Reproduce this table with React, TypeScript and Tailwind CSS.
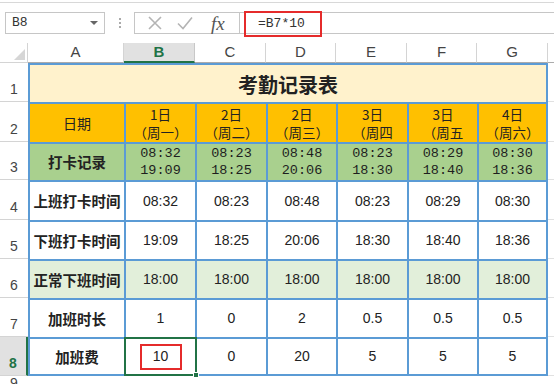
import React from "react";

const cjk = { fontFamily: '"Noto Sans CJK SC", "Liberation Sans", sans-serif' };
const sans = { fontFamily: '"Liberation Sans", "Noto Sans CJK SC", sans-serif' };
const mono = { fontFamily: '"Liberation Mono", "Noto Sans CJK SC", monospace' };

const colW = ["w-[96px]", "w-[71px]", "w-[71px]", "w-[70px]", "w-[71px]", "w-[70px]", "w-[71px]"];
const letters = ["A", "B", "C", "D", "E", "F", "G"];

const dates = [
  ["1日", "（周一）"],
  ["2日", "（周二）"],
  ["2日", "（周三）"],
  ["3日", "（周四"],
  ["3日", "（周五"],
  ["4日", "（周六）"],
];

const punches = [
  ["08:32", "19:09"],
  ["08:23", "18:25"],
  ["08:48", "20:06"],
  ["08:23", "18:30"],
  ["08:29", "18:40"],
  ["08:30", "18:36"],
];

const rows = [
  { n: 4, h: "h-[40px]", label: "上班打卡时间", bg: "bg-white", vals: ["08:32", "08:23", "08:48", "08:23", "08:29", "08:30"] },
  { n: 5, h: "h-[39px]", label: "下班打卡时间", bg: "bg-white", vals: ["19:09", "18:25", "20:06", "18:30", "18:40", "18:36"] },
  { n: 6, h: "h-[39px]", label: "正常下班时间", bg: "bg-[#e2efda]", vals: ["18:00", "18:00", "18:00", "18:00", "18:00", "18:00"] },
  { n: 7, h: "h-[39px]", label: "加班时长", bg: "bg-white", vals: ["1", "0", "2", "0.5", "0.5", "0.5"] },
];

function RowHead({ n, active }: { n: number; active?: boolean }) {
  return (
    <div
      style={sans}
      className={`w-[28px] shrink-0 flex items-end justify-center pb-[1px] text-[14px] border-b border-[#d4d4d4] ${
        active ? "bg-[#e1e1e1] text-[#217346] font-bold border-r-2 border-r-[#217346]" : "bg-white text-[#444]"
      }`}
    >
      {n}
    </div>
  );
}

function cellCls(i: number, last?: boolean) {
  return `${colW[i]} shrink-0 h-full flex items-center justify-center border-l-2 border-t-2 border-[#5b9bd5] ${
    i === 6 ? "border-r-2" : ""
  } ${last ? "border-b-2" : ""}`;
}

function Tail() {
  return <div className="flex-1 border-b border-[#e1e1e1]" />;
}

export default function App() {
  return (
    <div className="w-[554px] h-[384px] overflow-hidden bg-white text-[#222]">
      {/* formula bar */}
      <div className="h-[43px] pt-[2px]">
        <div className="border-t border-[#d8d8d8] h-full flex items-start pt-[9px]">
          <div className="ml-[5px] w-[100px] h-[22px] border border-[#c6c6c6] flex items-center justify-between pl-[6px] pr-[6px]">
            <span style={mono} className="text-[13px] text-[#333]">B8</span>
            <svg width="8" height="5" viewBox="0 0 8 5"><polygon points="0,0 8,0 4,4" fill="#666" /></svg>
          </div>
          <div className="w-[29px] h-[22px] flex flex-col items-center justify-center gap-[2px]">
            <span className="w-[2px] h-[2px] bg-[#aaa]" />
            <span className="w-[2px] h-[2px] bg-[#aaa]" />
            <span className="w-[2px] h-[2px] bg-[#aaa]" />
          </div>
          <div className="w-[106px] h-[22px] border border-[#c6c6c6] flex items-center pl-[12px]">
            <svg width="16" height="16" viewBox="0 0 16 16">
              <path d="M2 2 L14 14 M14 2 L2 14" stroke="#b4b4b4" strokeWidth="1.6" fill="none" />
            </svg>
            <svg width="18" height="16" viewBox="0 0 18 16" className="ml-[13px]">
              <path d="M2 8.5 L7 13.5 L16 2.5" stroke="#b4b4b4" strokeWidth="1.6" fill="none" />
            </svg>
            <span
              className="ml-[17px] text-[19px] italic text-[#555] leading-none"
              style={{ fontFamily: '"Liberation Serif", serif' }}
            >
              fx
            </span>
          </div>
          <div className="relative flex-1 h-[22px] border-t border-b border-[#c6c6c6]">
            <div className="absolute left-[4px] top-[-2px] w-[78px] h-[26px] border-2 border-[#e52b2b] flex items-center pl-[12px]">
              <span style={mono} className="text-[13px] text-[#333]">=B7*10</span>
            </div>
          </div>
        </div>
      </div>

      {/* column headers */}
      <div className="flex h-[20px]">
        <div className="w-[28px] shrink-0 border-b border-r border-[#d4d4d4] flex items-end justify-end pr-[2px] pb-[2px]">
          <svg width="11" height="11" viewBox="0 0 11 11"><polygon points="11,0 11,11 0,11" fill="#d6d6d6" /></svg>
        </div>
        {letters.map((l, i) => (
          <div
            key={l}
            style={sans}
            className={`${colW[i]} shrink-0 flex items-center justify-center text-[15px] ${
              i === 1
                ? "bg-[#e1e1e1] text-[#217346] font-bold border-b-2 border-[#217346] border-r border-r-[#c8c8c8]"
                : "text-[#444] border-b border-r border-[#d4d4d4] border-b-[#ababab]"
            }`}
          >
            {l}
          </div>
        ))}
        <div className="flex-1 border-b border-[#ababab]" />
      </div>

      {/* row 1 */}
      <div className="flex h-[39px]">
        <RowHead n={1} />
        <div
          style={cjk}
          className="w-[520px] shrink-0 h-full flex items-center justify-center border-l-2 border-t-2 border-r-2 border-[#5b9bd5] bg-[#fff2cc] text-[20px] font-bold pt-[3px]"
        >
          考勤记录表
        </div>
        <Tail />
      </div>

      {/* row 2 */}
      <div className="flex h-[40px]">
        <RowHead n={2} />
        <div style={cjk} className={`${cellCls(0)} bg-[#ffc000] text-[14px]`}>日期</div>
        {dates.map((d, i) => (
          <div key={i} style={cjk} className={`${cellCls(i + 1)} bg-[#ffc000] flex-col text-[13.5px] leading-[18px]`}>
            <span className="leading-[18px] h-[18px] overflow-visible">{d[0]}</span>
            <span className="leading-[18px] h-[18px] overflow-visible">{d[1]}</span>
          </div>
        ))}
        <Tail />
      </div>

      {/* row 3 */}
      <div className="flex h-[38px]">
        <RowHead n={3} />
        <div style={cjk} className={`${cellCls(0)} bg-[#a9d08e] text-[14.5px] font-bold`}>打卡记录</div>
        {punches.map((p, i) => (
          <div key={i} style={mono} className={`${cellCls(i + 1)} bg-[#a9d08e] flex-col text-[13.5px] leading-[17px] text-[#1e1e1e]`}>
            <span>{p[0]}</span>
            <span>{p[1]}</span>
          </div>
        ))}
        <Tail />
      </div>

      {/* rows 4-7 */}
      {rows.map((r) => (
        <div key={r.n} className={`flex ${r.h}`}>
          <RowHead n={r.n} />
          <div style={cjk} className={`${cellCls(0)} ${r.bg} text-[14.5px] font-bold`}>{r.label}</div>
          {r.vals.map((v, i) => (
            <div key={i} style={sans} className={`${cellCls(i + 1)} ${r.bg} text-[14px]`}>{v}</div>
          ))}
          <Tail />
        </div>
      ))}

      {/* row 8 */}
      <div className="flex h-[39px]">
        <RowHead n={8} active />
        <div style={cjk} className={`${cellCls(0, true)} bg-white text-[14.5px] font-bold`}>加班费</div>
        <div style={sans} className={`${cellCls(1, true)} relative bg-white text-[14px]`}>
          <div className="w-[42px] h-[26px] border-2 border-[#e52b2b] flex items-center justify-center">10</div>
          <div className="absolute inset-[-2px] border-2 border-[#217346]">
            <div className="absolute right-[-4px] bottom-[-4px] w-[6px] h-[6px] bg-[#217346] border border-white" />
          </div>
        </div>
        {["0", "20", "5", "5", "5"].map((v, i) => (
          <div key={i} style={sans} className={`${cellCls(i + 2, true)} bg-white text-[14px]`}>{v}</div>
        ))}
        <Tail />
      </div>

      {/* row 9 */}
      <div className="flex h-[20px]">
        <RowHead n={9} />
        <div className="flex-1" />
      </div>
    </div>
  );
}
